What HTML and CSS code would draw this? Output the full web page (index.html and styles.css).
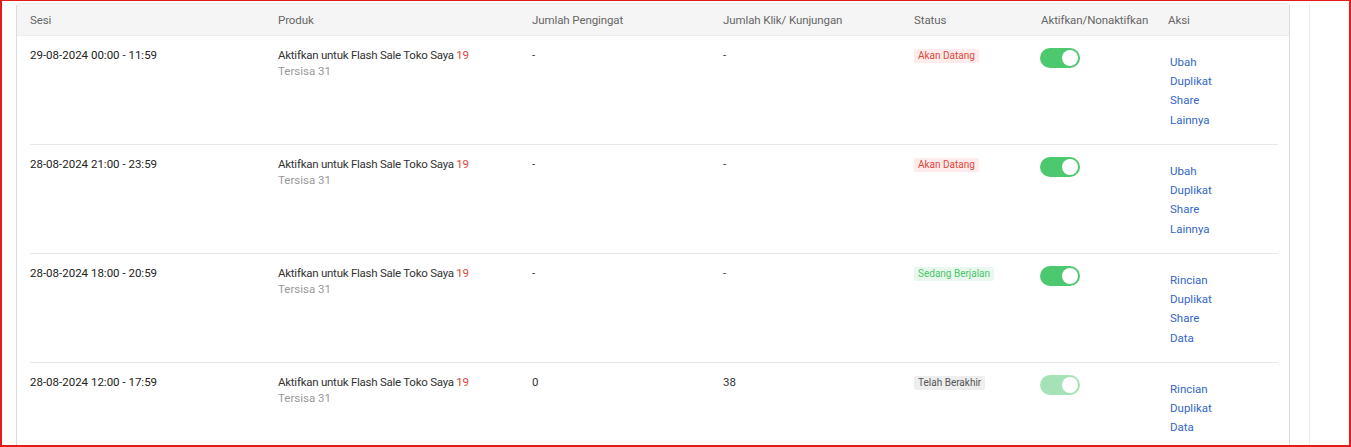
FILE: index.html
```html
<!DOCTYPE html>
<html lang="id">
<head>
<meta charset="utf-8">
<title>Flash Sale Toko Saya</title>
<link rel="stylesheet" href="styles.css">
</head>
<body>
<div class="frame">
  <div class="card">
    <div class="thead">
      <div class="grid">
        <div>Sesi</div>
        <div>Produk</div>
        <div>Jumlah Pengingat</div>
        <div>Jumlah Klik/ Kunjungan</div>
        <div>Status</div>
        <div>Aktifkan/Nonaktifkan</div>
        <div>Aksi</div>
      </div>
    </div>
    <div class="tbody">
      <div class="grid row">
        <div class="date">29-08-2024 00:00 - 11:59</div>
        <div class="prod">Aktifkan untuk Flash Sale Toko Saya <span class="num">19</span><div class="sub">Tersisa 31</div></div>
        <div>-</div>
        <div>-</div>
        <div><span class="badge badge-red">Akan Datang</span></div>
        <div><span class="toggle"><span class="knob"></span></span></div>
        <div class="actions"><a href="#">Ubah</a><a href="#">Duplikat</a><a href="#">Share</a><a href="#">Lainnya</a></div>
      </div>
      <div class="grid row">
        <div class="date">28-08-2024 21:00 - 23:59</div>
        <div class="prod">Aktifkan untuk Flash Sale Toko Saya <span class="num">19</span><div class="sub">Tersisa 31</div></div>
        <div>-</div>
        <div>-</div>
        <div><span class="badge badge-red">Akan Datang</span></div>
        <div><span class="toggle"><span class="knob"></span></span></div>
        <div class="actions"><a href="#">Ubah</a><a href="#">Duplikat</a><a href="#">Share</a><a href="#">Lainnya</a></div>
      </div>
      <div class="grid row">
        <div class="date">28-08-2024 18:00 - 20:59</div>
        <div class="prod">Aktifkan untuk Flash Sale Toko Saya <span class="num">19</span><div class="sub">Tersisa 31</div></div>
        <div>-</div>
        <div>-</div>
        <div><span class="badge badge-green">Sedang Berjalan</span></div>
        <div><span class="toggle"><span class="knob"></span></span></div>
        <div class="actions"><a href="#">Rincian</a><a href="#">Duplikat</a><a href="#">Share</a><a href="#">Data</a></div>
      </div>
      <div class="grid row">
        <div class="date">28-08-2024 12:00 - 17:59</div>
        <div class="prod">Aktifkan untuk Flash Sale Toko Saya <span class="num">19</span><div class="sub">Tersisa 31</div></div>
        <div>0</div>
        <div>38</div>
        <div><span class="badge badge-gray">Telah Berakhir</span></div>
        <div><span class="toggle toggle-disabled"><span class="knob"></span></span></div>
        <div class="actions"><a href="#">Rincian</a><a href="#">Duplikat</a><a href="#">Data</a></div>
      </div>
    </div>
  </div>
  <div class="side"></div>
</div>
</body>
</html>
```
FILE: styles.css
```css
* { box-sizing: border-box; }
html, body { margin: 0; padding: 0; background: #fff; }
body {
  font-family: Roboto, "Open Sans", sans-serif;
  font-size: 11.5px;
  line-height: 16px;
  color: #333;
}
.frame {
  height: 447px;
  border: 2px solid #e31b1b;
  border-top-width: 1px;
  padding: 2px 0 0 14px;
  display: flex;
  overflow: hidden;
}
.card {
  width: 1274px;
  flex: none;
  border-left: 1px solid #dcdcdc;
  border-right: 1px solid #dcdcdc;
  border-top: 1px solid #ececec;
  border-radius: 4px 4px 0 0;
  overflow: hidden;
}
.grid {
  display: grid;
  grid-template-columns: 248px 254px 191px 191px 127px 127px 1fr;
}
.thead {
  background: #f5f5f5;
  height: 32px;
  padding: 0 11px 0 13px;
  color: #666;
  border-bottom: 1px solid #ededed;
}
.thead .grid { height: 31px; align-items: center; letter-spacing: -0.1px; }
.tbody { padding: 0 11px 0 13px; }
.row {
  height: 109px;
  padding-top: 11px;
  border-bottom: 1px solid #e8e8e8;
}
.date { color: #222; }
.prod { letter-spacing: -0.25px; color: #333; }
.num { color: #e0463a; }
.sub { color: #999; letter-spacing: 0; }
.badge {
  display: inline-block;
  font-size: 10px;
  line-height: 14px;
  padding: 0 4px;
  margin-top: 2px;
  border-radius: 2px;
}
.badge-red { background: #fdeceb; color: #e2483d; }
.badge-green { background: #e9f8ed; color: #4cc56c; }
.badge-gray { background: #eeeeee; color: #555; }
.toggle {
  display: block;
  position: relative;
  width: 40px;
  height: 20px;
  margin-left: -1px;
  margin-top: 1px;
  border-radius: 10px;
  background: #4cc96e;
}
.toggle-disabled { background: #a6e2b8; }
.knob {
  position: absolute;
  right: 2px;
  top: 2px;
  width: 16px;
  height: 16px;
  border-radius: 50%;
  background: #fff;
}
.actions { padding-top: 6px; padding-left: 2px; }
.actions a {
  display: block;
  color: #3567c4;
  text-decoration: none;
  line-height: 19.2px;
}
.side {
  margin-left: 19px;
  flex: 1;
  border-left: 1px solid #ededed;
}
```
